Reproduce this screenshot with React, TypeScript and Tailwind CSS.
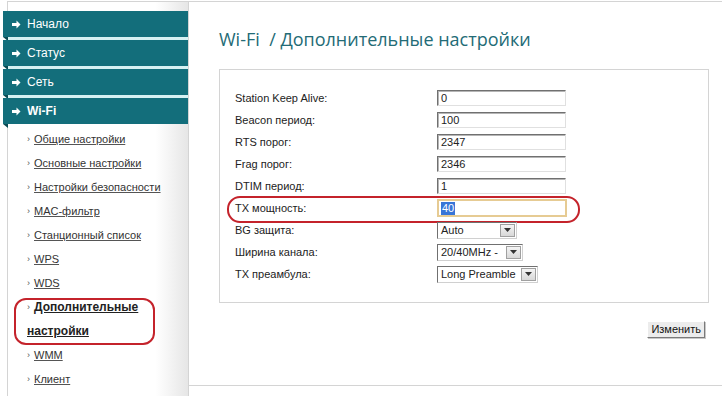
import React from "react";

const Arrow = () => (
  <svg width="9" height="9" viewBox="0 0 9 9" className="shrink-0">
    <path d="M0 3H4.5V0.5L8.5 4.5L4.5 8.5V6H0Z" fill="white" />
  </svg>
);

const Bar = ({ label, bold }: { label: string; bold?: boolean }) => (
  <div className="relative h-[26px] -ml-[5px] w-[calc(100%+5px)] bg-[#136e7b] flex items-center pl-[9px] text-white text-[12px]">
    <Arrow />
    <span className={"ml-[6px] " + (bold ? "font-bold" : "")}>{label}</span>
    <svg className="absolute left-0 top-full" width="5" height="4" viewBox="0 0 5 4">
      <path d="M0 0H5V4Z" fill="#0a4a53" />
    </svg>
  </div>
);

const Sub = ({ label }: { label: string }) => (
  <div className="h-[24px] pl-[19px] flex items-center text-[11px] text-[#333]">
    <span className="text-[9px] leading-none text-[#555] mr-[4px]">›</span>
    <span className="underline decoration-[#555] leading-none">{label}</span>
  </div>
);

const inputCls =
  "w-[129px] h-[16px] bg-white border border-t-[#707070] border-l-[#707070] border-r-[#e0e0e0] border-b-[#e0e0e0] shadow-[inset_1px_1px_0_#b5b5b5] text-[11px] leading-[14px] pl-[3px] text-[#222]";

const Input = ({ v }: { v: string }) => <div className={inputCls}>{v}</div>;

const DropBtn = () => (
  <div className="w-[15px] h-[13px] bg-gradient-to-b from-[#f4f4f4] to-[#d8d8d8] border border-[#a0a0a0] flex items-center justify-center ml-auto mr-[1px]">
    <svg width="7" height="4" viewBox="0 0 7 4">
      <path d="M0 0H7L3.5 4Z" fill="#333" />
    </svg>
  </div>
);

const Select = ({ v, w }: { v: string; w: string }) => (
  <div
    className={
      "h-[17px] bg-white border border-t-[#707070] border-l-[#707070] border-r-[#d0d0d0] border-b-[#d0d0d0] flex items-center text-[11px] pl-[3px] text-[#222] " +
      w
    }
  >
    <span>{v}</span>
    <DropBtn />
  </div>
);

const Row = ({ label, children, mark }: { label: string; children: React.ReactNode; mark?: boolean }) => (
  <div className="relative h-[22px] flex items-center">
    {mark && (
      <div className="absolute left-[-8px] top-[-1px] w-[353px] h-[27px] border-2 border-[#c4232b] rounded-[13px]" />
    )}
    <div className="w-[202px] text-[11px] text-[#222]">{label}</div>
    {children}
  </div>
);

export default function App() {
  return (
    <div
      className="w-[722px] h-[396px] overflow-hidden bg-white flex pt-[1px]"
      style={{ fontFamily: '"Liberation Sans", Arial, sans-serif' }}
    >
      {/* Sidebar */}
      <div className="ml-[7px] w-[182px] shrink-0 h-[420px] border-l border-t border-r border-[#d4d4d4] bg-gradient-to-r from-white from-[82%] to-[#e6e6e6]">
        <div className="mt-[9px] bg-[#d6f1f3] flex flex-col gap-[3px]">
          <Bar label="Начало" />
          <Bar label="Статус" />
          <Bar label="Сеть" />
          <Bar label="Wi-Fi" bold />
        </div>
        <div className="mt-[3px]">
          <Sub label="Общие настройки" />
          <Sub label="Основные настройки" />
          <Sub label="Настройки безопасности" />
          <Sub label="MAC-фильтр" />
          <Sub label="Станционный список" />
          <Sub label="WPS" />
          <Sub label="WDS" />
          <div className="relative text-[#222]">
            <div className="absolute left-[6px] top-[3px] w-[141px] h-[47px] border-2 border-[#c4232b] rounded-[12px]" />
            <div className="h-[24px] pl-[19px] flex items-center">
              <span className="text-[9px] leading-none text-[#555] mr-[4px]">›</span>
              <span className="underline font-bold text-[12px] leading-none">Дополнительные</span>
            </div>
            <div className="h-[24px] pl-[19px] flex items-center">
              <span className="underline font-bold text-[12px] leading-none">настройки</span>
            </div>
          </div>
          <Sub label="WMM" />
          <Sub label="Клиент" />
        </div>
      </div>

      {/* Main */}
      <div className="flex-1 h-[385px] border-t border-b border-[#d4d4d4] pl-[30px]">
        <div
          className="mt-[23px] h-[28px] text-[18px] leading-[28px] text-[#236b76]"
          style={{ fontFamily: '"Open Sans", "Noto Sans", sans-serif' }}
        >
          Wi-Fi&nbsp; / Дополнительные настройки
        </div>
        <div className="mt-[16px] w-[490px]">
          <div className="border border-[#d4d4d4] pl-[15px] pt-[17px] pb-[17px]">
            <Row label="Station Keep Alive:">
              <Input v="0" />
            </Row>
            <Row label="Beacon период:">
              <Input v="100" />
            </Row>
            <Row label="RTS порог:">
              <Input v="2347" />
            </Row>
            <Row label="Frag порог:">
              <Input v="2346" />
            </Row>
            <Row label="DTIM период:">
              <Input v="1" />
            </Row>
            <Row label="TX мощность:" mark>
              <div className="w-[130px] h-[18px] bg-white border-2 border-[#e6cb93] flex items-center pl-[2px] text-[11px]">
                <span className="bg-[#3875d7] text-white leading-[13px] px-[1px]">40</span>
              </div>
            </Row>
            <Row label="BG защита:">
              <Select v="Auto" w="w-[80px]" />
            </Row>
            <Row label="Ширина канала:">
              <Select v="20/40MHz -" w="w-[86px]" />
            </Row>
            <Row label="TX преамбула:">
              <Select v="Long Preamble" w="w-[101px]" />
            </Row>
          </div>
          <div className="flex justify-end mt-[18px] mr-[4px]">
            <div className="h-[17px] px-[3px] bg-[#ececec] border border-t-white border-l-white border-r-[#7a7a7a] border-b-[#7a7a7a] shadow-[1px_1px_0_#c8c8c8] text-[11px] leading-[15px] text-[#111]">
              Изменить
            </div>
          </div>
        </div>
      </div>
    </div>
  );
}
